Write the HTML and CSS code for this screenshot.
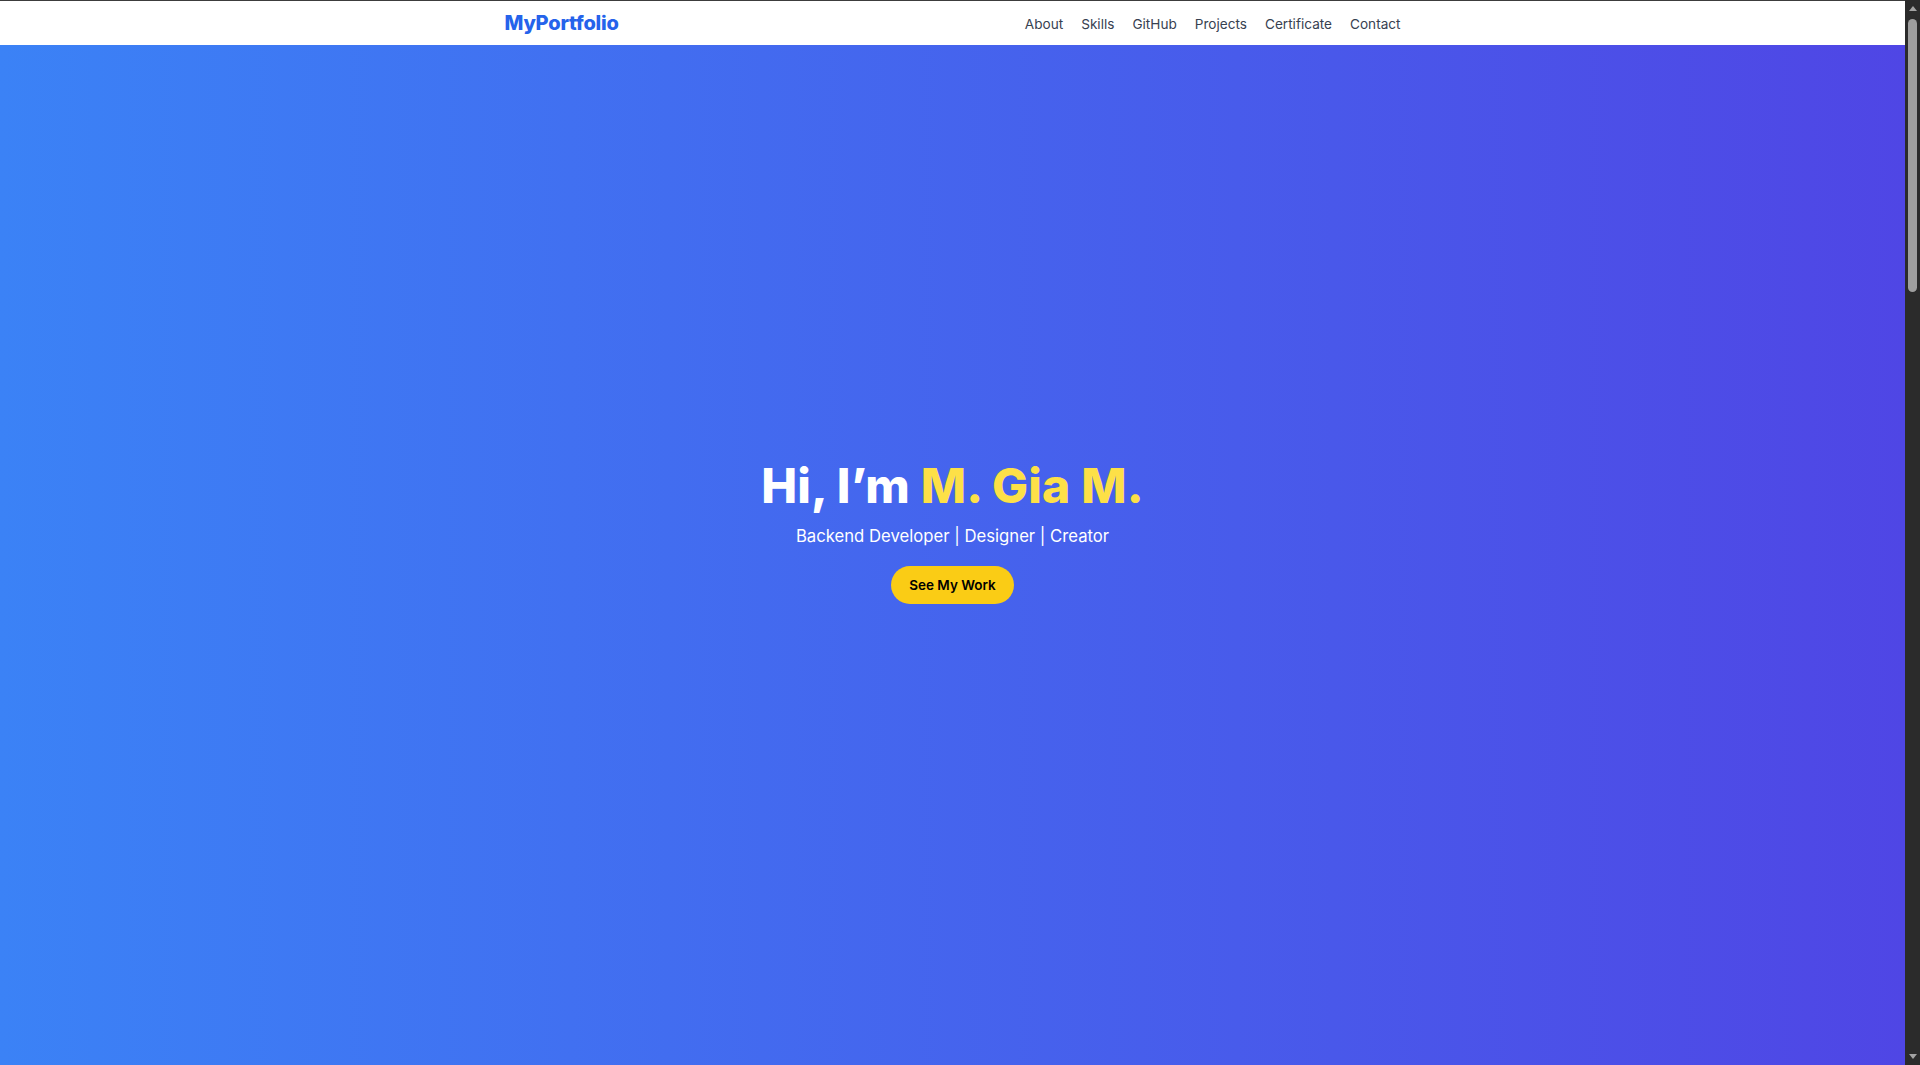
FILE: index.html
```html
<!DOCTYPE html>
<html lang="en">
<head>
<meta charset="UTF-8">
<title>MyPortfolio</title>
<link rel="stylesheet" href="styles.css">
</head>
<body>
<div class="page">
  <nav class="nav">
    <div class="nav-inner">
      <a class="logo" href="#">MyPortfolio</a>
      <ul class="nav-links">
        <li><a href="#about">About</a></li>
        <li><a href="#skills">Skills</a></li>
        <li><a href="#github">GitHub</a></li>
        <li><a href="#projects">Projects</a></li>
        <li><a href="#certificate">Certificate</a></li>
        <li><a href="#contact">Contact</a></li>
      </ul>
    </div>
  </nav>

  <header class="hero">
    <h1 class="hero-title">Hi, I’m <span class="accent">M. Gia M.</span></h1>
    <p class="hero-sub">Backend Developer | Designer | Creator</p>
    <a class="btn" href="#projects">See My Work</a>
  </header>
</div>

<div class="scrollbar" aria-hidden="true">
  <div class="sb-arrow sb-up"></div>
  <div class="sb-track">
    <div class="sb-thumb"></div>
  </div>
  <div class="sb-arrow sb-down"></div>
</div>
</body>
</html>
```

FILE: styles.css
```css
* {
  box-sizing: border-box;
}
html, body {
  margin: 0;
  padding: 0;
  height: 100%;
  overflow: hidden;
}
body {
  display: flex;
  font-family: "Inter", "Open Sans", sans-serif;
  background: #ffffff;
  color: #1f2937;
}
a {
  text-decoration: none;
  color: inherit;
}
.page {
  flex: 1;
  position: relative;
  height: 100vh;
}
.nav {
  position: absolute;
  top: 0;
  left: 0;
  right: 0;
  z-index: 10;
  background: #ffffff;
  border-top: 1px solid #3c3c3c;
  height: 45px;
}
.nav-inner {
  max-width: 896px;
  height: 100%;
  margin: 0 auto;
  display: flex;
  align-items: center;
  justify-content: space-between;
}
.logo {
  font-size: 20px;
  font-weight: 800;
  letter-spacing: -0.2px;
  color: #2563eb;
  line-height: 28px;
}
.nav-links {
  display: flex;
  gap: 18px;
  list-style: none;
  margin: 0;
  padding: 0;
}
.nav-links a {
  font-size: 13.6px;
  line-height: 20px;
  color: #374151;
}
.hero {
  height: 100vh;
  display: flex;
  flex-direction: column;
  align-items: center;
  justify-content: center;
  text-align: center;
  background: linear-gradient(to right, #3b82f6, #4f46e5);
  color: #ffffff;
}
.hero-title {
  margin: 0 0 12px;
  font-size: 48px;
  line-height: 48px;
  font-weight: 800;
  letter-spacing: 0.2px;
}
.accent {
  color: #fde047;
}
.hero-sub {
  margin: 0 0 16px;
  font-size: 16.7px;
  line-height: 28px;
  font-weight: 400;
}
.btn {
  display: inline-block;
  background: #facc15;
  color: #000000;
  font-size: 13.5px;
  line-height: 20px;
  font-weight: 600;
  padding: 9px 18px;
  border-radius: 999px;
}
.scrollbar {
  width: 15px;
  height: 100vh;
  flex: none;
  display: flex;
  flex-direction: column;
  background: #2b2b2b;
}
.sb-arrow {
  height: 17px;
  flex: none;
  display: flex;
  justify-content: center;
  align-items: center;
}
.sb-up::before,
.sb-down::before {
  content: "";
  width: 0;
  height: 0;
  border-left: 4px solid transparent;
  border-right: 4px solid transparent;
}
.sb-up::before {
  border-bottom: 5px solid #a3a3a3;
}
.sb-down::before {
  border-top: 5px solid #a3a3a3;
}
.sb-track {
  flex: 1;
  padding-top: 2px;
}
.sb-thumb {
  width: 9px;
  height: 273px;
  margin: 0 auto;
  border-radius: 5px;
  background: #9f9f9f;
}
```
